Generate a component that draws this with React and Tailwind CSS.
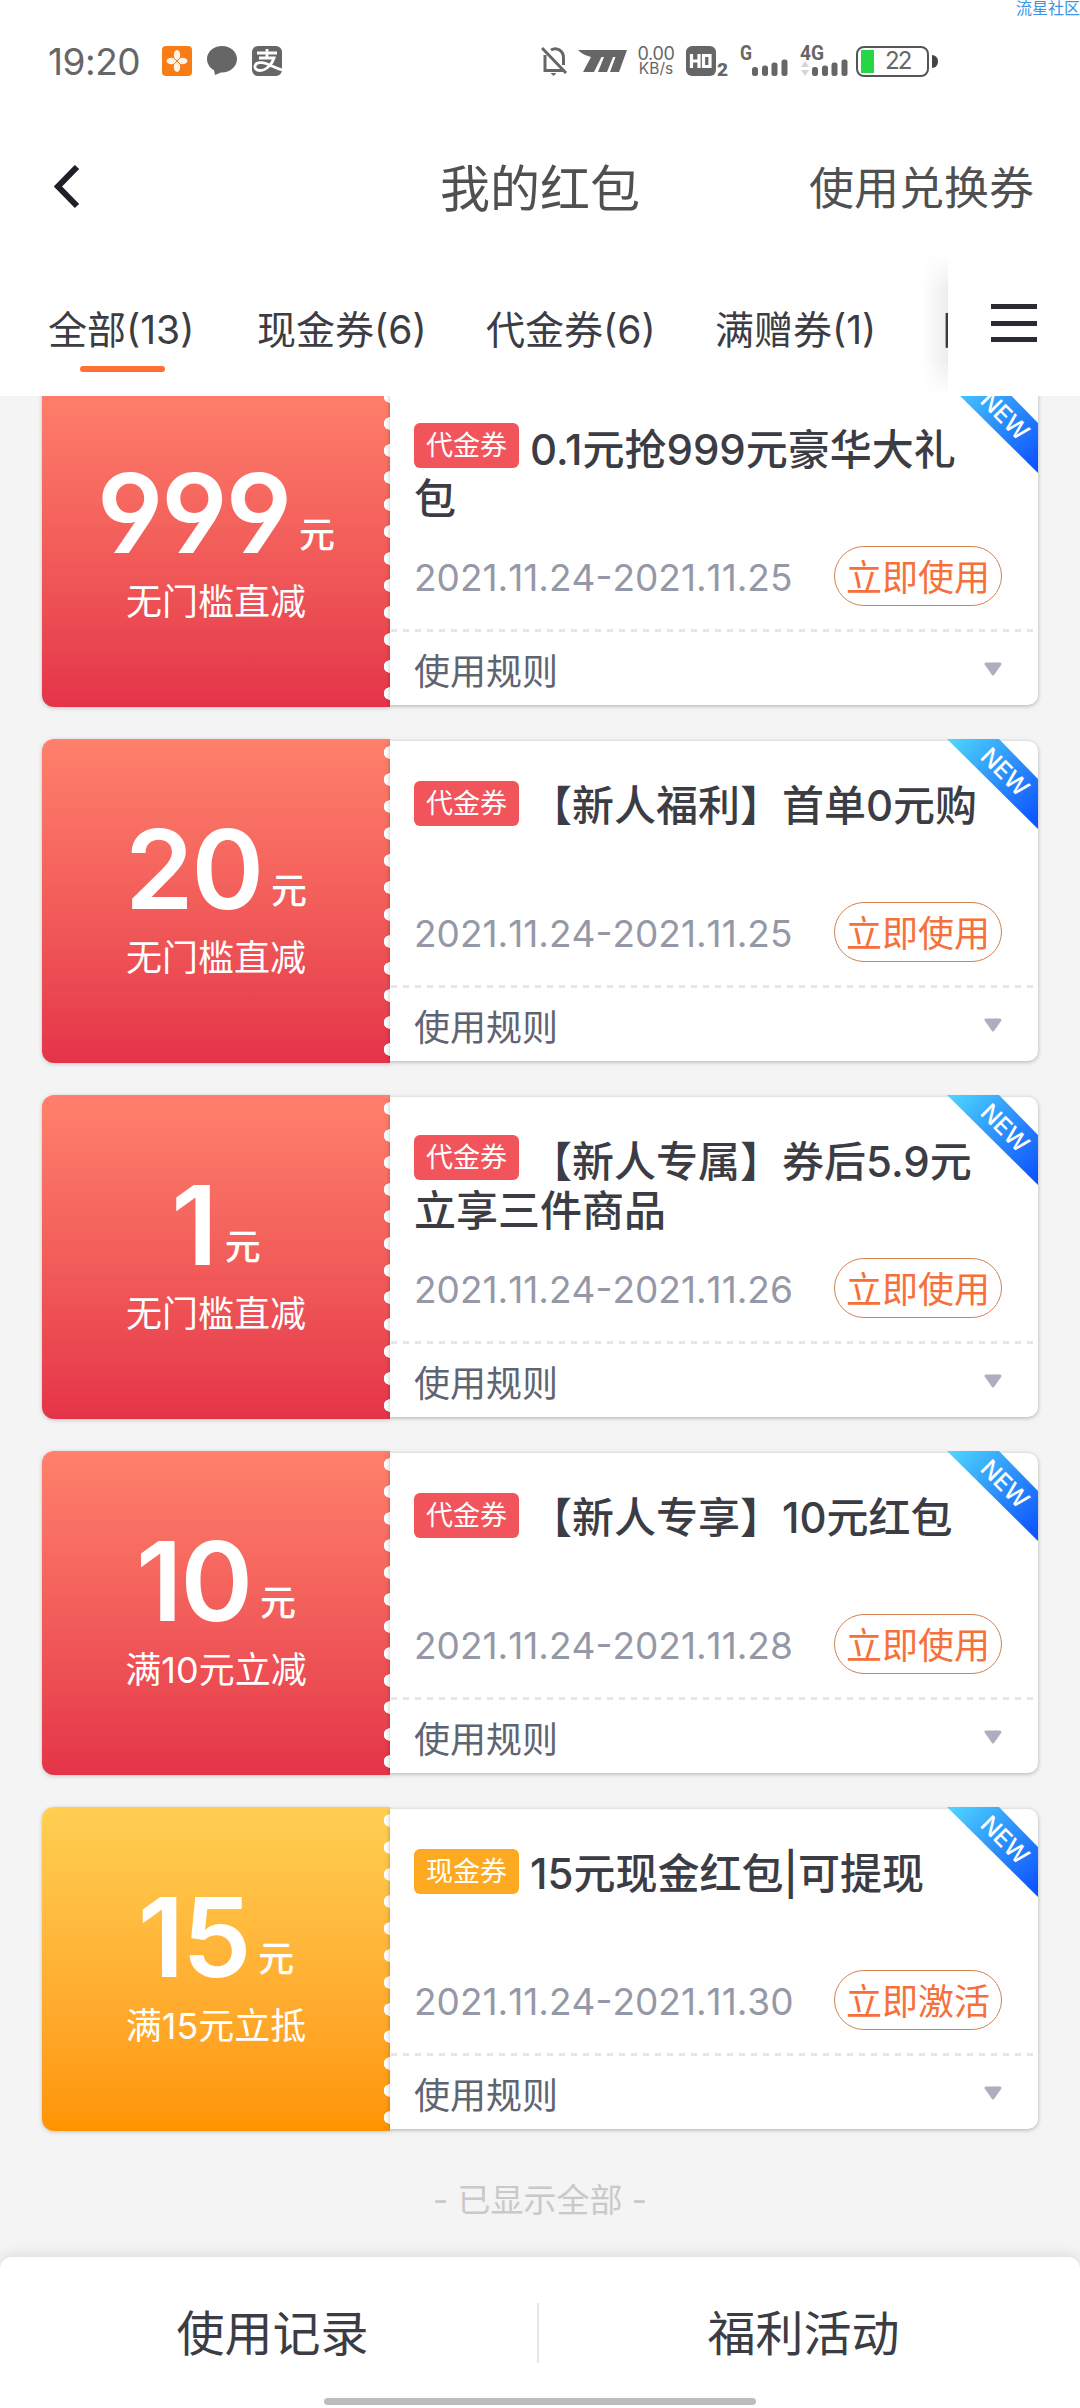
const TABS = [
  { label: '全部(13)', width: 'w-[209px]', active: true },
  { label: '现金券(6)', width: 'w-[229px]' },
  { label: '代金券(6)', width: 'w-[229px]' },
  { label: '满赠券(1)', width: 'w-[227px]' },
  { label: '限', width: 'w-[229px]' },
];

const COUPONS = [
  { id: 1, amount: '999', rule: '无门槛直减', tag: '代金券', title: '0.1元抢999元豪华大礼包', date: '2021.11.24-2021.11.25', action: '立即使用', multiline: true },
  { id: 2, amount: '20', rule: '无门槛直减', tag: '代金券', title: '【新人福利】首单0元购', date: '2021.11.24-2021.11.25', action: '立即使用' },
  { id: 3, amount: '1', rule: '无门槛直减', tag: '代金券', title: '【新人专属】券后5.9元立享三件商品', date: '2021.11.24-2021.11.26', action: '立即使用', multiline: true },
  { id: 4, amount: '10', rule: '满10元立减', tag: '代金券', title: '【新人专享】10元红包', date: '2021.11.24-2021.11.28', action: '立即使用' },
  { id: 5, amount: '15', rule: '满15元立抵', tag: '现金券', title: '15元现金红包|可提现', date: '2021.11.24-2021.11.30', action: '立即激活', cash: true },
];

function Signal({ label, arrows }) {
  return (
    <svg width="48" height="32" viewBox="0 0 48 32" fill="#666">
      <text x="0" y="15" fontSize="20" fontWeight="700" fontFamily="Roboto, sans-serif" textLength={arrows ? 24 : 12} lengthAdjust="spacingAndGlyphs">{label}</text>
      {arrows && <path d="M1 22l4-6 4 6zM1 25l4 6 4-6z" fill="#d6d6d6" />}
      <rect x="12" y="22" width="6" height="9" rx="2.500" />
      <rect x="22" y="20.500" width="6" height="10.500" rx="2.500" />
      <rect x="31.500" y="17.500" width="6" height="13.500" rx="2.500" />
      <rect x="41.500" y="14.500" width="6" height="16.500" rx="2.500" />
    </svg>
  );
}

function StatusBar() {
  return (
    <div className="flex h-[122px] items-center text-[#666]">
      <span className="ml-[48px] w-[114px] text-[37px] leading-none tracking-[-0.500px]">19:20</span>
      <div className="flex gap-[15px]">
        <svg width="30" height="30" viewBox="0 0 30 30">
          <rect width="30" height="30" rx="4" fill="#f97c14" />
          <g fill="#fff3e4">
            <ellipse cx="15" cy="9" rx="3.200" ry="5" />
            <ellipse cx="15" cy="21" rx="3.200" ry="5" />
            <ellipse cx="9.500" cy="15" rx="5" ry="3.200" />
            <ellipse cx="20.500" cy="15" rx="5" ry="3.200" />
          </g>
          <path d="M12 12l6 6M18 12l-6 6" stroke="#f97c14" strokeWidth="1" />
        </svg>
        <svg width="30" height="30" viewBox="0 0 30 30" fill="#666">
          <path d="M15 0C6.500 0 0 5.800 0 13c0 4.800 2.800 8.900 7 11.200L8 29l6-2.500C23 26.800 30 20.800 30 13 30 5.800 23.500 0 15 0z" />
        </svg>
        <svg width="30" height="30" viewBox="0 0 30 30">
          <rect width="30" height="30" rx="6" fill="#666" />
          <path d="M5 7h20M15 3v8M7 12h15c-1.500 5-7 12.500-14 12.500-4 0-5.500-2.500-5-4.500 1-4 7-4 11-2.500C19 19.500 24 22 30 24" fill="none" stroke="#fff" strokeWidth="2.800" />
        </svg>
      </div>
      <div className="ml-[259px] flex items-center">
        <svg width="27" height="30" viewBox="0 0 27 30" fill="none" stroke="#666" strokeWidth="3">
          <path d="M1 2l24 25M4 9v15.500h18M10 4c6-3.500 12.500 1 12.500 8v7" />
          <path d="M9.500 27h6l-3 3z" fill="#666" stroke="none" />
        </svg>
        <svg className="ml-[10px]" width="49" height="22" viewBox="0 0 49 22" fill="#666">
          <path d="M0 0h49l-8 22h-9l5.500-15h-2.500L29 22h-9l6-15h-2.500L16 22H5l8-15C9 6 4 4 0 0z" />
        </svg>
        <div className="ml-[9px] flex w-[40px] flex-col items-center text-[15.500px] leading-[15px]">
          <span className="text-[18px] tracking-[-0.300px]">0.00</span>
          <span>KB/s</span>
        </div>
        <svg className="ml-[10px]" width="30" height="30" viewBox="0 0 30 30">
          <rect width="30" height="30" rx="6" fill="#666" />
          <path d="M5.500 8v14M13 8v14M5.500 15H13M17.500 8v14M16 9.500h8v11h-8" fill="none" stroke="#fff" strokeWidth="3.200" />
        </svg>
        <span className="mt-[16px] w-[24px] pl-px font-['Roboto'] text-[19px] leading-none font-black">2</span>
        <Signal label="G" />
        <span className="w-3" />
        <Signal label="4G" arrows />
        <div className="ml-[8px] flex h-[31px] w-[73px] items-center rounded-[8px] border-2 border-[#555] pl-[3px]">
          <div className="h-[23px] w-[13px] bg-[#27d645]" />
          <span className="ml-[11px] text-[24px] leading-none tracking-[-2px]">22</span>
        </div>
        <div className="ml-[3px] h-[13px] w-[6px] rounded-r-full bg-[#444]" />
      </div>
    </div>
  );
}

function Header() {
  return (
    <div className="grid h-[132px] grid-cols-[1fr_auto_1fr] items-center text-[#505050]">
      <svg className="-mt-[3px] ml-[54px]" width="26" height="44" viewBox="0 0 26 44" fill="none" stroke="#1f1f28" strokeWidth="6">
        <path d="M23 2L4 21.500 23 41" />
      </svg>
      <h1 className="pt-px text-[50px] leading-none">我的红包</h1>
      <span className="mr-[46px] text-right text-[45px] leading-none">使用兑换券</span>
    </div>
  );
}

function Tabs() {
  return (
    <div className="flex h-[142px]">
      <div className="flex w-[948px] shrink-0 overflow-hidden pt-[54px] pl-[48px] text-[39px] text-[#3c3d44]">
        {TABS.map(tab => (
          <div key={tab.label} className={`shrink-0 ${tab.width}`}>
            <div className="leading-[44px] whitespace-nowrap">{tab.label}</div>
            {tab.active && <div className="mt-[14px] ml-[32px] h-[6px] w-[85px] rounded-full bg-[#ff7033]" />}
          </div>
        ))}
      </div>
      <div className="relative flex flex-1 flex-col gap-[11.500px] bg-white pt-[50px] pl-[43px]">
        <div className="absolute inset-y-0 right-full w-[26px] bg-linear-to-l from-black/7 to-transparent mask-y-from-75% mask-y-to-100%" />
        <div className="h-[5px] w-[46px] bg-[#2a2a32]" />
        <div className="h-[5px] w-[46px] bg-[#2a2a32]" />
        <div className="h-[5px] w-[46px] bg-[#2a2a32]" />
      </div>
    </div>
  );
}

function NewRibbon({ id }) {
  return (
    <svg className="absolute -top-[2px] right-0" width="91" height="90" viewBox="0 0 91 90">
      <defs>
        <linearGradient id={`ribbon-${id}`} x1="0" y1="0" x2="1" y2="1">
          <stop offset="0" stopColor="#4fd8ff" />
          <stop offset="0.450" stopColor="#2f97fb" />
          <stop offset="1" stopColor="#0a4dff" />
        </linearGradient>
      </defs>
      <path d="M0 0H52L91 40V90z" fill={`url(#ribbon-${id})`} />
      <text transform="translate(58 33) rotate(45)" y="8.500" textAnchor="middle" fontSize="24" fontWeight="500" fill="#fff" fontFamily="Inter, sans-serif">NEW</text>
    </svg>
  );
}

function Coupon({ coupon }) {
  return (
    <div className="flex h-[324px] items-center">
      <div
        className={`flex h-[324px] w-[348px] shrink-0 flex-col items-center rounded-l-[12px] bg-linear-to-b text-white shadow-[0_1px_4px_rgba(0,0,0,0.2)] ${
          coupon.cash ? 'from-[#ffcf52] to-[#ff9400]' : 'from-[#ff806c] to-[#e43349]'
        }`}
      >
        <div className="flex h-full w-full flex-col items-center bg-[radial-gradient(circle_at_100%_50%,#fff_6px,transparent_6.5px)] bg-[length:27px_27px] bg-right-top bg-repeat-y">
          <div className="mt-[75px] flex items-end">
            <span className="text-[110px] leading-[110px] font-semibold tracking-[-2px] [font-feature-settings:'cv03','cv04'] [font-kerning:none]">{coupon.amount}</span>
            <span className="mb-[15px] ml-[9px] text-[36px] leading-none font-medium">元</span>
          </div>
          <div className="mt-[12px] text-[36px] leading-[44px]">{coupon.rule}</div>
        </div>
      </div>

      <div className="relative flex h-[320px] flex-1 flex-col rounded-r-[10px] bg-white shadow-[0_1px_4px_rgba(0,0,0,0.28)]">
        <NewRibbon id={coupon.id} />
        <div className="h-[147px] w-[604px] pt-[40px] pl-[24px] text-[42px] leading-[49px] font-medium text-[#3c3d44]">
          <span
            className={`float-left mr-[11px] h-[45px] w-[105px] rounded-[6px] text-center text-[27px] leading-[46px] font-normal text-white ${
              coupon.cash ? 'bg-[#fea922]' : 'bg-[#f1545a]'
            } ${coupon.multiline ? '-mt-[2px]' : ''}`}
          >
            {coupon.tag}
          </span>
          {coupon.title}
        </div>
        <div className="mt-[14px] flex h-[60px] items-center justify-between pr-[36px] pl-[24px]">
          <span className="pt-[3px] text-[37px] leading-none whitespace-nowrap text-[#9598a6] [font-kerning:none]">{coupon.date}</span>
          <button className="h-[60px] w-[168px] rounded-full border border-[#d0834f] pt-[3px] text-[36px] leading-none text-[#f5703a]">
            {coupon.action}
          </button>
        </div>
        <div className="mt-[23px] mr-[4px] ml-[1px] h-[3px] bg-[repeating-linear-gradient(90deg,#e6e6e6_0_6px,transparent_6px_12px)]" />
        <div className="flex flex-1 items-center justify-between pr-[36px] pl-[24px]">
          <span className="pt-[6px] text-[36px] leading-none text-[#5f6472]">使用规则</span>
          <svg width="18" height="14" viewBox="0 0 18 14" fill="#afadc0" stroke="#afadc0" strokeWidth="3" strokeLinejoin="round">
            <path d="M2 2h14l-7 10z" />
          </svg>
        </div>
      </div>
    </div>
  );
}

export default function App() {
  return (
    <div
      lang="zh-CN"
      className="relative flex h-[2408px] w-[1080px] flex-col overflow-hidden bg-[#f4f4f4] font-['Inter','Noto_Sans_CJK_SC',sans-serif]"
    >
      <div className="absolute top-0 right-0 z-20 text-[16px] leading-[17px] whitespace-nowrap text-[#3d93e6]">流星社区</div>
      <div className="relative z-10 bg-white">
        <StatusBar />
        <Header />
        <Tabs />
      </div>

      {/* The list is scrolled a little, so the first card sits partly under the tabs */}
      <div className="-mt-[13px] flex flex-col gap-[32px] px-[42px]">
        {COUPONS.map(c => (
          <Coupon key={c.id} coupon={c} />
        ))}
      </div>
      <div className="mt-[47px] text-center text-[33px] leading-[44px] text-[#c9c9c9]">- 已显示全部 -</div>

      <div className="mt-auto h-[151px] rounded-t-[12px] bg-white text-[48px] text-[#3c3d44] shadow-[0_-2px_14px_rgba(0,0,0,0.1)]">
        <div className="flex h-[141px] items-center pt-[10px] pr-[12px] pl-[8px]">
          <div className="flex-1 pt-[3px] text-center">使用记录</div>
          <div className="h-[60px] w-[2px] bg-[#e6e6e6]" />
          <div className="flex-1 pt-[3px] text-center">福利活动</div>
        </div>
        <div className="mx-auto h-[7px] w-[432px] rounded-full bg-[#bdbdbd]" />
      </div>
    </div>
  );
}
